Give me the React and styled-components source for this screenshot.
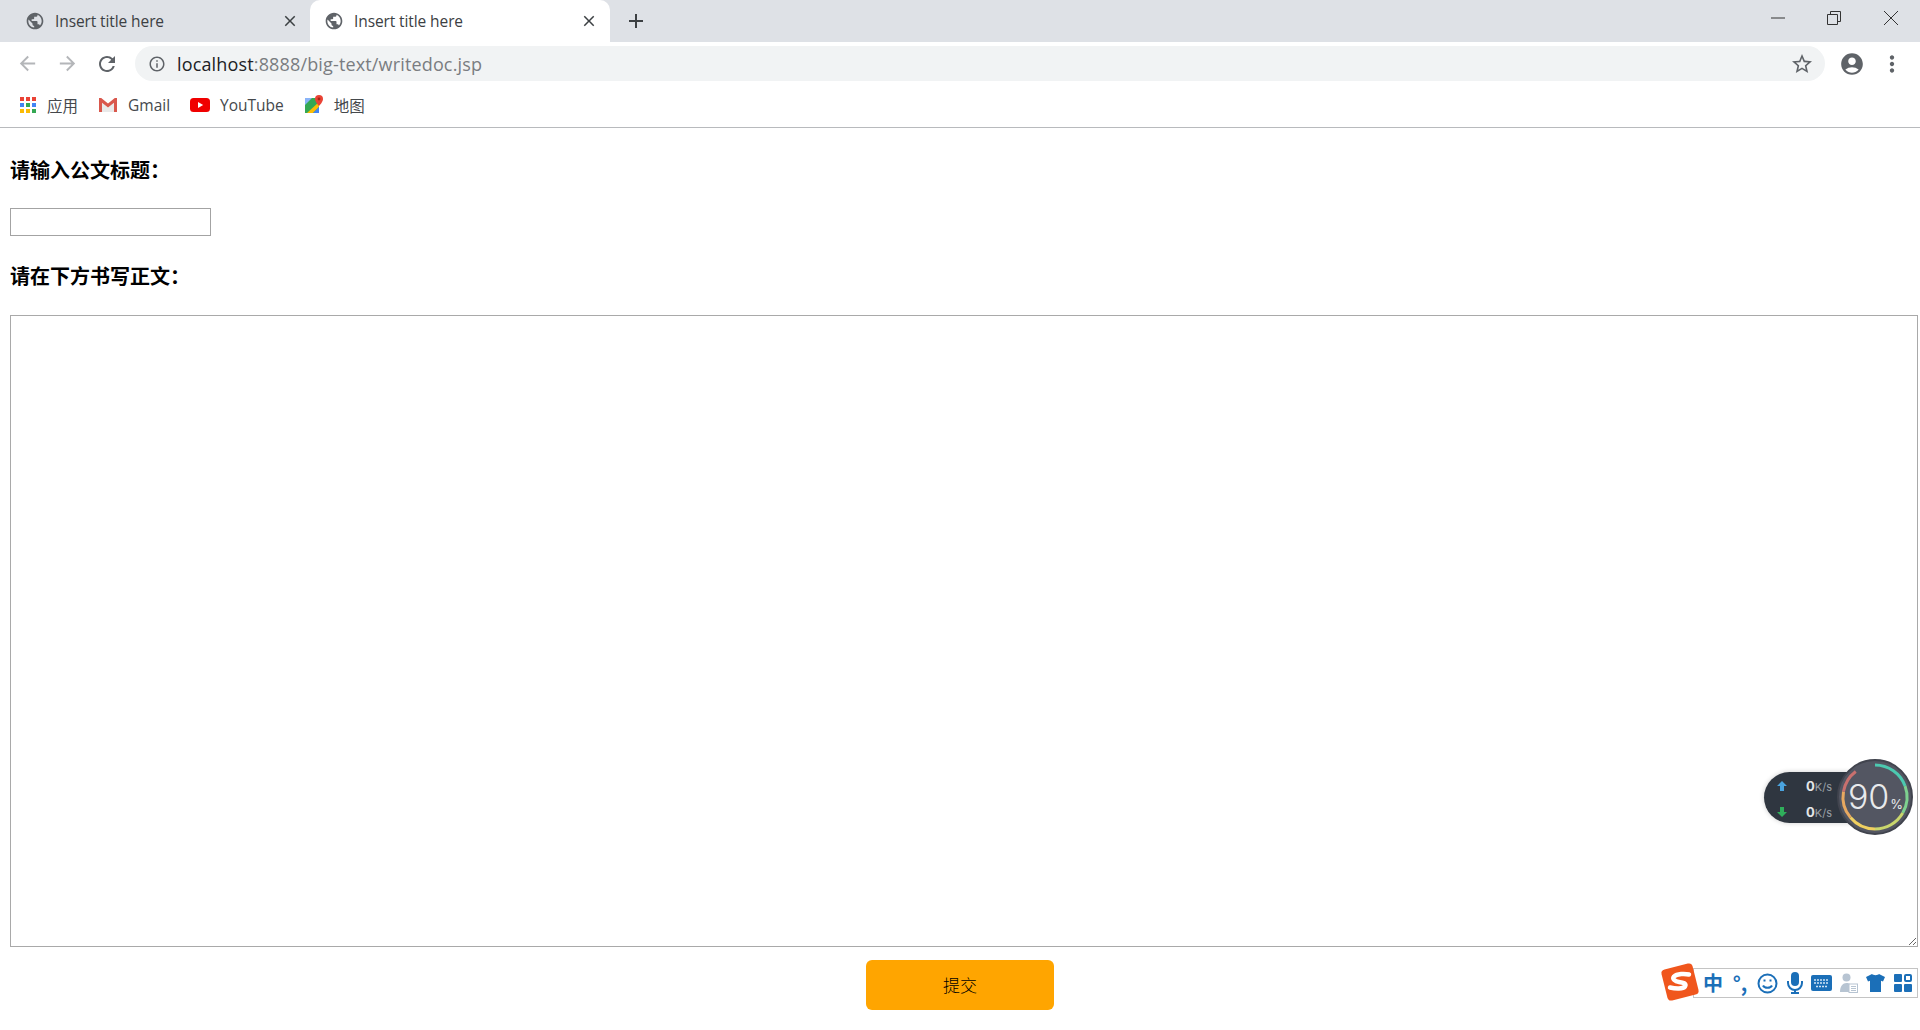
import React from 'react';
import styled, { createGlobalStyle } from 'styled-components';
import { MdPublic, MdClose, MdAdd, MdArrowBack, MdArrowForward, MdRefresh, MdInfoOutline, MdStarBorder, MdAccountCircle, MdMoreVert } from 'react-icons/md';

const GlobalStyle = createGlobalStyle`
    html, body {
        margin: 0;
        padding: 0;
        height: 100%;
        overflow: hidden;
        background: #ffffff;
    }
    * { box-sizing: border-box; }
`;

const CHROME_FONT = `"Open Sans", "Noto Sans CJK SC", sans-serif`;
const PAGE_FONT = `"Noto Sans CJK SC", "Liberation Sans", sans-serif`;

const Page = styled.div`
    position: relative;
    width: 1920px;
    height: 1030px;
    display: flex;
    flex-direction: column;
    overflow: hidden;
`;

const TabStrip = styled.div`
    height: 42px;
    background: #dee1e6;
    display: flex;
    align-items: flex-end;
    flex-shrink: 0;
`;
const Tab = styled.div`
    width: ${(props) => (props.active ? '300px' : '299px')};
    margin-left: ${(props) => (props.active ? '11px' : '0')};
    height: 42px;
    padding: 0 ${(props) => (props.active ? '12px' : '0')} 0 ${(props) => (props.active ? '14px' : '25px')};
    background: ${(props) => (props.active ? '#ffffff' : 'transparent')};
    border-radius: 10px 10px 0 0;
    display: flex;
    align-items: center;
    color: #3c4043;
    font: 15.5px ${CHROME_FONT};
`;
const TabTitle = styled.span`
    flex: 1;
    margin-left: 10px;
    letter-spacing: -0.1px;
`;
const NewTab = styled.div`
    width: 24px;
    height: 42px;
    margin-left: 14px;
    display: flex;
    align-items: center;
    justify-content: center;
    color: #3c4043;
`;
const WindowButtons = styled.div`
    margin-left: auto;
    height: 42px;
    display: flex;
    align-items: flex-start;
    padding: 9px 21px 0 0;
    gap: 41px;
`;

const Toolbar = styled.div`
    height: 43px;
    flex-shrink: 0;
    background: #ffffff;
    display: flex;
    align-items: center;
    padding: 0 11px 0 15px;
`;
const NavButton = styled.div`
    width: 24px;
    height: 24px;
    margin-right: 16px;
    display: flex;
    align-items: center;
    justify-content: center;
    color: ${(props) => (props.disabled ? '#b4b6b9' : '#5f6368')};
`;
const Omnibox = styled.div`
    width: 1690px;
    height: 35px;
    border-radius: 18px;
    background: #f1f3f4;
    display: flex;
    align-items: center;
    padding: 0 11px 0 13px;
    color: #5f6368;
`;
const Url = styled.div`
    flex: 1;
    margin-left: 11px;
    font: 18px ${CHROME_FONT};
    letter-spacing: 0.15px;
    color: #7a7d81;
`;
const Host = styled.span`
    color: #202124;
`;
const ToolIcon = styled.div`
    margin-left: ${(props) => props.gap || '13px'};
    display: flex;
    color: #5f6368;
`;

const Bookmarks = styled.div`
    height: 43px;
    flex-shrink: 0;
    display: flex;
    align-items: center;
    padding: 0 0 2px 19px;
    gap: 20px;
    background: #ffffff;
    border-bottom: 1px solid #b8babd;
`;
const Bookmark = styled.div`
    display: flex;
    align-items: center;
    gap: 10px;
    color: #45484c;
    font: 15.5px ${CHROME_FONT};
`;

const Main = styled.div`
    flex: 1;
    padding: 0 2px 0 10px;
    display: flex;
    flex-direction: column;
`;
const Heading = styled.h3`
    margin: ${(props) => props.top} 0 0;
    height: 30px;
    line-height: 30px;
    font: bold 20px/30px ${PAGE_FONT};
    color: #000000;
`;
const TitleInput = styled.input`
    display: block;
    width: 201px;
    height: 28px;
    margin-top: 23px;
    padding: 1px 2px;
    border: 1px solid #a3a3a3;
    background: #ffffff;
    outline: none;
`;
const BodyArea = styled.textarea`
    display: block;
    width: 100%;
    height: 632px;
    margin-top: 24px;
    border: 1px solid #a9a9a9;
    outline: none;
    resize: both;
    background: #ffffff;
`;
const SubmitRow = styled.div`
    display: flex;
    justify-content: center;
    padding: 13px 0 0 0;
    margin-left: -10px;
    margin-right: -2px;
`;
const SubmitButton = styled.button`
    width: 188px;
    height: 50px;
    padding: 0 0 2px;
    border: none;
    border-radius: 6px;
    background: #ffa500;
    color: #000000;
    font: 300 17px ${PAGE_FONT};
`;

/* desktop widgets that float over the page */
const NetWidget = styled.div`
    position: absolute;
    left: 1764px;
    top: 759px;
    width: 150px;
    height: 76px;
    display: flex;
    align-items: center;
`;
const NetPill = styled.div`
    width: 95px;
    height: 51px;
    flex-shrink: 0;
    border-radius: 26px 0 0 26px;
    background: #2f3640;
    box-shadow: 0 0 5px rgba(0, 0, 0, 0.2);
    padding: 3px 27px 0 12px;
    display: flex;
    flex-direction: column;
    justify-content: center;
    gap: 12px;
`;
const NetRow = styled.div`
    height: 14px;
    display: flex;
    align-items: center;
    justify-content: space-between;
`;
const NetValue = styled.span`
    font: bold 13px "Inter", sans-serif;
    color: #e4e6e8;
`;
const NetUnit = styled.span`
    font: 11px "Inter", sans-serif;
    color: #9aa0a6;
`;
const Gauge = styled.div`
    position: relative;
    width: 76px;
    height: 76px;
    margin-left: -22px;
    flex-shrink: 0;
`;
const GaugeText = styled.div`
    position: absolute;
    inset: 0;
    display: flex;
    align-items: baseline;
    justify-content: center;
    padding: 19px 0 0 1px;
    color: #e8eaec;
    font: 300 34px/38px "Inter", sans-serif;
`;
const GaugeUnit = styled.span`
    margin-left: 1px;
    font: 13px "Inter", sans-serif;
`;

const ImeBar = styled.div`
    position: absolute;
    left: 1693px;
    top: 968px;
    width: 225px;
    height: 30px;
    border: 1px solid #c4c4c4;
    background: #ffffff;
    display: flex;
    align-items: center;
    padding-left: 6px;
    color: #1b6fb8;
`;
const ImeText = styled.span`
    font: bold ${(props) => props.size} "Noto Sans CJK SC", sans-serif;
    color: #1b6fb8;
    width: ${(props) => props.w};
    text-align: center;
    line-height: 26px;
`;
const ImeSlot = styled.span`
    width: 27px;
    display: flex;
    justify-content: center;
`;
const ImeLogo = styled.svg`
    position: absolute;
    left: 1660px;
    top: 962px;
`;

const AppsIcon = () => {
    const colors = ['#ea4335', '#ea4335', '#ea4335', '#4285f4', '#34a853', '#4285f4', '#fbbc05', '#fbbc05', '#34a853'];
    return (
        <svg width="18" height="18" viewBox="0 0 18 18">
            {colors.map((c, i) => (
                <rect key={i} x={1 + (i % 3) * 6} y={1 + Math.floor(i / 3) * 6} width="4" height="4" fill={c} />
            ))}
        </svg>
    );
};
const GmailIcon = () => (
    <svg width="20" height="16" viewBox="0 0 20 16">
        <path d="M4 5.8l6 4.8 6-4.8V15H4z" fill="#e9e9e9" />
        <path d="M1 1h2.2L10 6.600 16.800 1H19v14h-3V5.800L10 10.600 4 5.800V15H1z" fill="#d9574c" />
    </svg>
);
const YoutubeIcon = () => (
    <svg width="20" height="14" viewBox="0 0 20 14">
        <rect width="20" height="14" rx="3.5" fill="#f00000" />
        <path d="M8 4l5.2 3L8 10z" fill="#ffffff" />
    </svg>
);
const MapsIcon = () => (
    <svg width="20" height="20" viewBox="0 0 20 20">
        <path d="M1 3h14v15H1z" fill="#34a853" />
        <path d="M1 3h7L1 10z" fill="#8ab4f8" />
        <path d="M3 18L15 7v5l-6 6z" fill="#fbbc05" />
        <path d="M9 18l6-6v6z" fill="#4285f4" />
        <path d="M15 0a4 4 0 0 0-4 4c0 3 4 7 4 7s4-4 4-7a4 4 0 0 0-4-4z" fill="#ea4335" />
        <circle cx="15" cy="4" r="1.4" fill="#a52714" />
    </svg>
);

const ringPoint = (deg) => {
    const rad = (deg * Math.PI) / 180;
    return `${(38 + 32 * Math.sin(rad)).toFixed(2)} ${(38 - 32 * Math.cos(rad)).toFixed(2)}`;
};
const ringParts = [
    [0, 70, '#4cc9b0'],
    [70, 120, '#7ed08f'],
    [120, 180, '#c9d66c'],
    [180, 230, '#f0d060'],
    [230, 280, '#e8a860'],
    [280, 323, '#c9706e'],
];

const App = () => {
    return (
        <Page>
            <GlobalStyle />
            <TabStrip>
                <Tab>
                    <MdPublic size={20} color="#5f6368" />
                    <TabTitle>Insert title here</TabTitle>
                    <MdClose size={18} color="#3c4043" />
                </Tab>
                <Tab active>
                    <MdPublic size={20} color="#5f6368" />
                    <TabTitle>Insert title here</TabTitle>
                    <MdClose size={18} color="#3c4043" />
                </Tab>
                <NewTab><MdAdd size={24} /></NewTab>
                <WindowButtons>
                    <svg width="14" height="18" viewBox="0 0 14 18"><path d="M0 9h14" stroke="#333" /></svg>
                    <svg width="16" height="18" viewBox="0 0 16 18" fill="none" stroke="#333"><path d="M1.5 5.5h10v10h-10zM4.5 5.5v-3h10v10h-3" /></svg>
                    <svg width="16" height="18" viewBox="0 0 16 18" fill="none" stroke="#333"><path d="M1 2l14 14M15 2L1 16" /></svg>
                </WindowButtons>
            </TabStrip>

            <Toolbar>
                <NavButton disabled><MdArrowBack size={23} /></NavButton>
                <NavButton disabled><MdArrowForward size={23} /></NavButton>
                <NavButton><MdRefresh size={24} /></NavButton>
                <Omnibox>
                    <MdInfoOutline size={18} />
                    <Url><Host>localhost</Host>:8888/big-text/writedoc.jsp</Url>
                    <MdStarBorder size={24} />
                </Omnibox>
                <ToolIcon gap="14px"><MdAccountCircle size={26} /></ToolIcon>
                <ToolIcon gap="14px"><MdMoreVert size={26} /></ToolIcon>
            </Toolbar>

            <Bookmarks>
                <Bookmark><AppsIcon /><span>应用</span></Bookmark>
                <Bookmark><GmailIcon /><span>Gmail</span></Bookmark>
                <Bookmark><YoutubeIcon /><span>YouTube</span></Bookmark>
                <Bookmark><MapsIcon /><span>地图</span></Bookmark>
            </Bookmarks>

            <Main>
                <Heading top="27px">请输入公文标题：</Heading>
                <TitleInput type="text" />
                <Heading top="25px">请在下方书写正文：</Heading>
                <BodyArea />
                <SubmitRow>
                    <SubmitButton>提交</SubmitButton>
                </SubmitRow>
            </Main>

            <NetWidget>
                <NetPill>
                    <NetRow>
                        <svg width="12" height="12" viewBox="0 0 12 12"><path d="M6 1l5 5H8v5H4V6H1z" fill="#4aa3df" /></svg>
                        <span><NetValue>0</NetValue><NetUnit>K/s</NetUnit></span>
                    </NetRow>
                    <NetRow>
                        <svg width="12" height="12" viewBox="0 0 12 12"><path d="M6 11L1 6h3V1h4v5h3z" fill="#2fae5b" /></svg>
                        <span><NetValue>0</NetValue><NetUnit>K/s</NetUnit></span>
                    </NetRow>
                </NetPill>
                <Gauge>
                    <svg width="76" height="76" viewBox="0 0 76 76" fill="none">
                        <circle cx="38" cy="38" r="37" fill="#535662" stroke="#41444e" strokeWidth="2" />
                        {ringParts.map(([from, to, color]) => (
                            <path key={from} d={`M${ringPoint(from)}A32 32 0 0 1 ${ringPoint(to)}`} stroke={color} strokeWidth="3" />
                        ))}
                    </svg>
                    <GaugeText>90<GaugeUnit>%</GaugeUnit></GaugeText>
                </Gauge>
            </NetWidget>

            <ImeBar>
                <ImeText size="20px" w="26px">中</ImeText>
                <ImeText size="20px" w="28px">°,</ImeText>
                <ImeSlot>
                    <svg width="21" height="21" viewBox="0 0 21 21" fill="none" stroke="#1b6fb8" strokeWidth="2">
                        <circle cx="10.5" cy="10.5" r="9" />
                        <path d="M6 12.5c1.5 3 7.500 3 9 0" />
                        <path d="M7.500 6.500v2M13.500 6.500v2" />
                    </svg>
                </ImeSlot>
                <ImeSlot>
                    <svg width="18" height="22" viewBox="0 0 18 22" fill="#1b6fb8">
                        <rect x="5" y="0" width="8" height="14" rx="4" />
                        <path d="M2 9v2a7 7 0 0 0 14 0V9" fill="none" stroke="#1b6fb8" strokeWidth="2" />
                        <path d="M8 18h2v2h3v2H5v-2h3z" />
                    </svg>
                </ImeSlot>
                <ImeSlot>
                    <svg width="21" height="16" viewBox="0 0 21 16">
                        <rect width="21" height="16" rx="2" fill="#1b6fb8" />
                        <path d="M3 5h15M3 8h15M5 11.500h11" stroke="#cfe3f5" strokeWidth="1.600" strokeDasharray="2 1" />
                    </svg>
                </ImeSlot>
                <ImeSlot>
                    <svg width="18" height="20" viewBox="0 0 18 20">
                        <circle cx="6.500" cy="4.500" r="4" fill="#b7c4d2" />
                        <path d="M0 19c0-6 3-9 6.500-9 2 0 3 .5 4 1.500V19z" fill="#b7c4d2" />
                        <rect x="9" y="11" width="8.500" height="8.500" fill="#ffffff" stroke="#b7c4d2" />
                        <path d="M11 13.500h5M11 15.500h5M11 17.500h5" stroke="#b7c4d2" />
                    </svg>
                </ImeSlot>
                <ImeSlot>
                    <svg width="19" height="18" viewBox="0 0 19 18" fill="#1b6fb8">
                        <path d="M6 0c1 1.500 6 1.500 7 0l6 3-2 4.500-2-.8V18H4V6.700l-2 .8L0 3z" />
                    </svg>
                </ImeSlot>
                <ImeSlot>
                    <svg width="18" height="18" viewBox="0 0 18 18" fill="#1b6fb8">
                        <rect x="0" y="0" width="8" height="8" rx="1" />
                        <rect x="11" y="1" width="6" height="6" rx="1" fill="none" stroke="#1b6fb8" strokeWidth="2" />
                        <rect x="0" y="10" width="8" height="8" rx="1" />
                        <rect x="10" y="10" width="8" height="8" rx="1" />
                    </svg>
                </ImeSlot>
            </ImeBar>
            <ImeLogo width="40" height="40" viewBox="0 0 40 40">
                <rect x="4" y="4" width="32" height="32" rx="4" fill="#f0561d" transform="rotate(-14 20 20)" />
                <path d="M29 12.500c-4-1-12-1-15 2-2 2.500 1 5 5 5.500s8 1.500 6 4.500c-2 2.500-9 2.500-15 1" fill="none" stroke="#ffffff" strokeWidth="4.500" strokeLinecap="round" />
            </ImeLogo>
        </Page>
    );
};

export default App;
